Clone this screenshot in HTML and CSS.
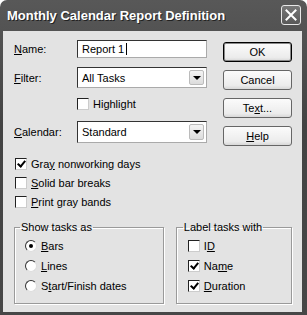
FILE: index.html
```html
<!DOCTYPE html>
<html lang="en">
<head>
  <meta charset="UTF-8">
  <title>Monthly Calendar Report Definition</title>
  <link rel="stylesheet" href="styles.css">
</head>
<body>
  <div class="window">
    <div class="titlebar">
      <span class="title">Monthly Calendar Report Definition</span>
      <span class="close">
        <svg width="12" height="12" viewBox="0 0 12 12"><path d="M1.5 1.5 L10.5 10.5 M10.5 1.5 L1.5 10.5" stroke="#fff" stroke-width="2" stroke-linecap="square"/></svg>
      </span>
    </div>

    <div class="content">
      <div class="top">
        <div class="fields">
          <div class="row row-name">
            <label><u>N</u>ame:</label>
            <div class="textbox">Report 1<span class="caret"></span></div>
          </div>
          <div class="row row-filter">
            <label><u>F</u>ilter:</label>
            <div class="combo"><span class="value">All Tasks</span><span class="drop"></span></div>
          </div>
          <div class="row row-highlight">
            <span class="check"></span><span>Highlight</span>
          </div>
          <div class="row row-calendar">
            <label><u>C</u>alendar:</label>
            <div class="combo tall"><span class="value">Standard</span><span class="drop"></span></div>
          </div>
        </div>

        <div class="buttons">
          <button class="btn default">OK</button>
          <button class="btn">Cancel</button>
          <button class="btn">Te<u>x</u>t...</button>
          <button class="btn"><u>H</u>elp</button>
        </div>
      </div>

      <div class="checks">
        <div class="opt"><span class="check on"></span><span>Gra<u>y</u> nonworking days</span></div>
        <div class="opt"><span class="check"></span><span><u>S</u>olid bar breaks</span></div>
        <div class="opt"><span class="check"></span><span><u>P</u>rint gray bands</span></div>
      </div>

      <div class="groups">
        <fieldset class="group group-show">
          <legend>Show tasks as</legend>
          <div class="opt"><span class="radio on"></span><span><u>B</u>ars</span></div>
          <div class="opt"><span class="radio"></span><span><u>L</u>ines</span></div>
          <div class="opt"><span class="radio"></span><span>S<u>t</u>art/Finish dates</span></div>
        </fieldset>
        <fieldset class="group group-label">
          <legend>Label tasks with</legend>
          <div class="opt"><span class="check"></span><span>I<u>D</u></span></div>
          <div class="opt"><span class="check on"></span><span>Na<u>m</u>e</span></div>
          <div class="opt"><span class="check on"></span><span><u>D</u>uration</span></div>
        </fieldset>
      </div>
    </div>
  </div>
</body>
</html>
```

FILE: styles.css
```css
:root {
  --face: #e3e3e3;
}

* {
  box-sizing: border-box;
}

body {
  margin: 0;
  background: #fff;
  font-family: "Liberation Sans", Arial, sans-serif;
  font-size: 11px;
  color: #000;
}

u {
  text-decoration: underline;
  text-underline-offset: 1px;
}

.window {
  width: 307px;
  height: 315px;
  background: linear-gradient(#585858, #434343 40%, #474747);
  border-radius: 7px 7px 0 0;
  padding: 0 5px 3px 3px;
  display: flex;
  flex-direction: column;
}

.titlebar {
  height: 31px;
  display: flex;
  align-items: center;
  justify-content: space-between;
  padding: 0 1px 0 4px;
}

.title {
  color: #fff;
  font-weight: bold;
  font-size: 13px;
  text-shadow: 1px 1px 0 #222;
}

.close {
  width: 20px;
  height: 20px;
  border: 1px solid #e8e8e8;
  border-radius: 3px;
  background: linear-gradient(#777, #595959);
  display: flex;
  align-items: center;
  justify-content: center;
  margin-top: -1px;
}

.content {
  flex: 1;
  background: var(--face);
  padding: 9px 10px 0 11px;
}

.top {
  display: flex;
}

.fields {
  width: 196px;
}

.row {
  display: flex;
  align-items: center;
}

.row label {
  width: 63px;
}

.row-name { height: 18px; }
.row-filter { height: 21px; margin-top: 9px; }
.row-highlight { height: 12px; margin-top: 10px; padding-left: 63px; gap: 4px; }
.row-calendar { height: 22px; margin-top: 11px; }

.textbox,
.combo {
  width: 130px;
  height: 100%;
  background: #fff;
  border: 1px solid;
  border-color: #333 #aaa #aaa #333;
  display: flex;
  align-items: center;
  padding-left: 4px;
}

.caret {
  display: inline-block;
  width: 1px;
  height: 12px;
  background: #000;
  margin-left: 2px;
}

.combo .value {
  flex: 1;
}

.drop {
  width: 15px;
  height: calc(100% - 4px);
  margin-right: 2px;
  background: linear-gradient(#f4f4f4, #dcdcdc);
  border: 1px solid #bbb;
  border-radius: 2px;
  position: relative;
}

.drop::after {
  content: "";
  position: absolute;
  left: 3px;
  top: 50%;
  margin-top: -2px;
  border-left: 4px solid transparent;
  border-right: 4px solid transparent;
  border-top: 4px solid #000;
}

.buttons {
  margin-left: 16px;
  margin-top: 2px;
  display: flex;
  flex-direction: column;
  gap: 8px;
}

.btn {
  width: 69px;
  height: 20px;
  font-family: inherit;
  font-size: 11px;
  color: #000;
  padding: 0;
  background: linear-gradient(#fbfbfb, #ececec 80%, #d8d8d8);
  border: 1px solid #666;
  border-radius: 3px;
}

.btn.default {
  border: 1px solid #000;
  box-shadow: inset 0 0 0 1px #888;
}

.checks {
  margin-top: 8px;
}

.opt {
  height: 19px;
  display: flex;
  align-items: center;
  gap: 4px;
}

.checks .opt {
  padding-left: 1px;
}

.check {
  width: 12px;
  height: 12px;
  flex: none;
  background: #fff;
  border: 1px solid;
  border-color: #222 #ccc #ccc #222;
  position: relative;
}

.check.on::after {
  content: "";
  position: absolute;
  left: 3px;
  top: 0;
  width: 3px;
  height: 6px;
  border: solid #000;
  border-width: 0 2px 2px 0;
  transform: rotate(40deg);
}

.radio {
  width: 12px;
  height: 12px;
  flex: none;
  border-radius: 50%;
  background: #fff;
  border: 1px solid;
  border-color: #333 #ddd #ddd #333;
  position: relative;
}

.radio.on::after {
  content: "";
  position: absolute;
  left: 3px;
  top: 3px;
  width: 4px;
  height: 4px;
  border-radius: 50%;
  background: #000;
}

.groups {
  display: flex;
  gap: 12px;
  margin-top: 9px;
}

.group {
  margin: 0;
  height: 84px;
  border: 1px solid #9a9a9a;
  box-shadow: 1px 1px 0 #fff, inset 1px 1px 0 #fff;
  padding: 2px 0 0 10px;
}

.group legend {
  padding: 0 1px;
  margin-left: -5px;
  line-height: 14px;
}

.group .opt {
  height: 20px;
}

.group-show { width: 151px; }
.group-label { width: 117px; padding-left: 11px; }
```
